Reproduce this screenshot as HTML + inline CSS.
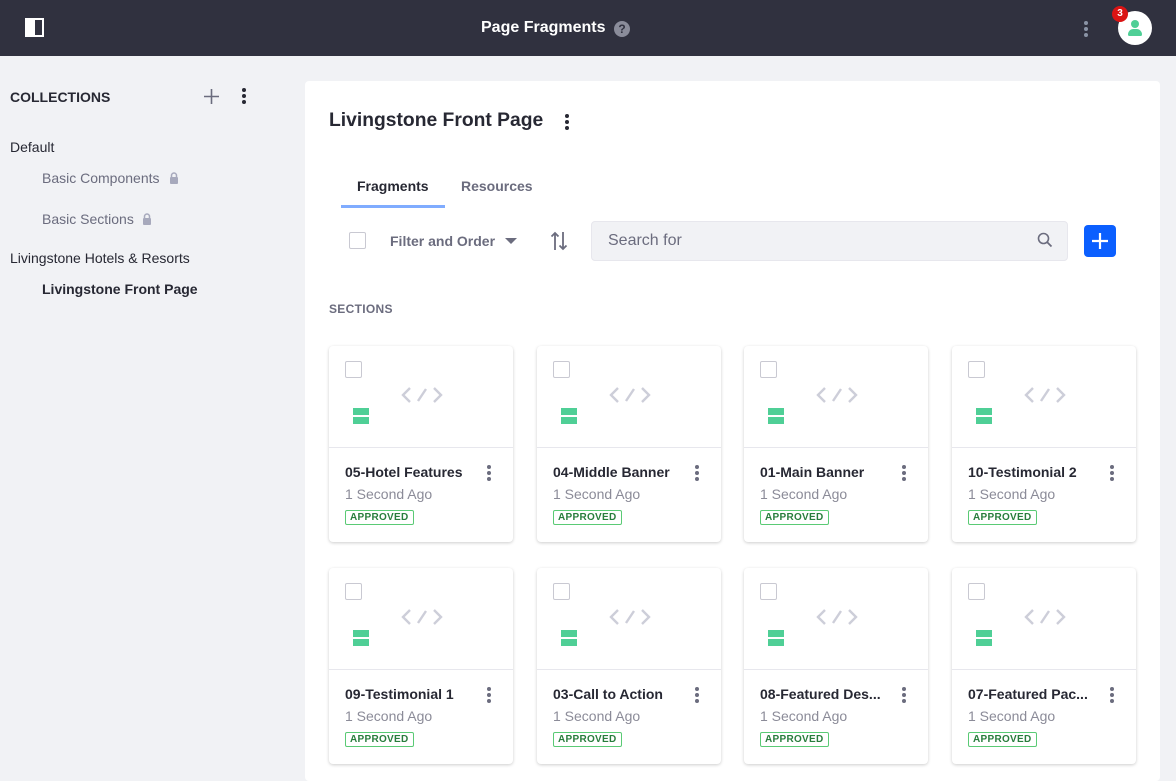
<!DOCTYPE html>
<html><head><meta charset="utf-8"><style>
*{box-sizing:border-box;margin:0;padding:0}
body{width:1176px;height:776px;overflow:hidden;background:#f1f2f5;font-family:"Liberation Sans",sans-serif;color:#272833;position:relative}
.top{position:absolute;left:0;top:0;width:1176px;height:56px;background:#30313f}
.abs{position:absolute}
.panel{position:absolute;left:305px;top:81px;width:855px;height:700px;background:#fff;border-radius:4px}
.card{position:absolute;width:184px;height:196px;background:#fff;border-radius:4px;box-shadow:0 1px 3px rgba(0,0,0,.2)}
.card .img{height:102px;border-bottom:1px solid #e7e7ed;position:relative}
.cb{position:absolute;width:17px;height:17px;border:1px solid #c9c9d2;border-radius:2px;background:#fff}
.card .t{position:absolute;left:16px;top:118px;font-size:14px;font-weight:bold;color:#272833}
.card .s{position:absolute;left:16px;top:140px;font-size:14px;color:#8b8b98}
.card .b{position:absolute;left:16px;top:164px;font-size:10px;font-weight:bold;color:#287d3c;border:1px solid #5aca75;border-radius:2px;padding:1px 4px;letter-spacing:.3px;line-height:11px}
.dots{position:absolute;width:4px}
.dots i{display:block;width:4px;height:4px;border-radius:2px;background:#6b6c7e;margin-bottom:2px}
</style></head><body>
<div class="top">
 <div class="abs" style="left:25px;top:18px;width:19px;height:19px;border:2px solid #fff;"><div style="width:8px;height:15px;background:#fff"></div></div>
 <div class="abs" style="left:481px;top:19px;color:#fff;font-size:16px;font-weight:bold">Page Fragments</div>
 <div class="abs" style="left:614px;top:21px;width:16px;height:16px;border-radius:8px;background:#8a8c9a;color:#30313f;font-size:12px;font-weight:bold;text-align:center;line-height:16px">?</div>
 <div class="dots" style="left:1084px;top:21px"><i style="background:#8a93a5"></i><i style="background:#8a93a5"></i><i style="background:#8a93a5"></i></div>
 <div class="abs" style="left:1118px;top:11px;width:34px;height:34px;border-radius:17px;background:#fff">
  <div class="abs" style="left:13px;top:9px;width:8px;height:8px;border-radius:4px;background:#4fcf96"></div>
  <div class="abs" style="left:10px;top:18px;width:14px;height:7px;border-radius:7px 7px 2px 2px;background:#4fcf96"></div>
 </div>
 <div class="abs" style="left:1112px;top:6px;width:16px;height:16px;border-radius:8px;background:#da1414;color:#fff;font-size:10px;font-weight:bold;text-align:center;line-height:16px">3</div>
</div>

<div class="abs" style="left:10px;top:89px;font-size:14px;font-weight:bold">COLLECTIONS</div>
<svg class="abs" style="left:203px;top:88px" width="17" height="17"><path d="M8.5 1v15M1 8.5h15" stroke="#6b6c7e" stroke-width="1.6"/></svg>
<div class="dots" style="left:242px;top:88px"><i style="background:#272833"></i><i style="background:#272833"></i><i style="background:#272833"></i></div>
<div class="abs" style="left:10px;top:139px;font-size:14px">Default</div>
<div class="abs" style="left:42px;top:170px;font-size:14px;color:#6b6c7e">Basic Components</div>
<svg class="abs" style="left:169px;top:172px" width="10" height="12" viewBox="0 0 10 12"><path d="M2.5 5V3.5a2.5 2.5 0 015 0V5" fill="none" stroke="#a7a9bc" stroke-width="1.5"/><rect x="1" y="5" width="8" height="7" rx="1" fill="#a7a9bc"/></svg>
<div class="abs" style="left:42px;top:211px;font-size:14px;color:#6b6c7e">Basic Sections</div>
<svg class="abs" style="left:142px;top:213px" width="10" height="12" viewBox="0 0 10 12"><path d="M2.5 5V3.5a2.5 2.5 0 015 0V5" fill="none" stroke="#a7a9bc" stroke-width="1.5"/><rect x="1" y="5" width="8" height="7" rx="1" fill="#a7a9bc"/></svg>
<div class="abs" style="left:10px;top:250px;font-size:14px">Livingstone Hotels &amp; Resorts</div>
<div class="abs" style="left:42px;top:281px;font-size:14px;font-weight:bold">Livingstone Front Page</div>

<div class="panel"></div>
<div class="abs" style="left:329px;top:110px;font-size:19.3px;font-weight:bold">Livingstone Front Page</div>
<div class="dots" style="left:565px;top:114px"><i style="background:#272833"></i><i style="background:#272833"></i><i style="background:#272833"></i></div>
<div class="abs" style="left:357px;top:178px;font-size:14px;font-weight:bold">Fragments</div>
<div class="abs" style="left:461px;top:178px;font-size:14px;font-weight:bold;color:#6b6c7e">Resources</div>
<div class="abs" style="left:341px;top:205px;width:104px;height:3px;background:#80acff"></div>
<div class="cb" style="left:349px;top:232px"></div>
<div class="abs" style="left:390px;top:233px;font-size:14px;font-weight:bold;color:#6b6c7e">Filter and Order</div>
<div class="abs" style="left:505px;top:238px;width:0;height:0;border-left:6px solid transparent;border-right:6px solid transparent;border-top:6px solid #6b6c7e"></div>
<svg class="abs" style="left:550px;top:231px" width="18" height="20" viewBox="0 0 18 20"><path d="M5 19V2M1.5 5.5L5 2l3.5 3.5M13 1v17M9.5 14.5L13 18l3.5-3.5" fill="none" stroke="#6b6c7e" stroke-width="1.8"/></svg>
<div class="abs" style="left:591px;top:221px;width:477px;height:40px;background:#f1f2f5;border:1px solid #e7e7ed;border-radius:4px"></div>
<div class="abs" style="left:608px;top:232px;font-size:16px;color:#6b6c7e">Search for</div>
<svg class="abs" style="left:1037px;top:232px" width="16" height="16" viewBox="0 0 16 16"><circle cx="6.5" cy="6.5" r="5" fill="none" stroke="#6b6c7e" stroke-width="1.6"/><path d="M10 10l4.5 4.5" stroke="#6b6c7e" stroke-width="1.8"/></svg>
<div class="abs" style="left:1084px;top:225px;width:32px;height:32px;background:#0b5fff;border-radius:4px"><svg width="32" height="32"><path d="M16 8v16M8 16h16" stroke="#fff" stroke-width="2.2"/></svg></div>
<div class="abs" style="left:329px;top:302px;font-size:12px;font-weight:bold;color:#6b6c7e;letter-spacing:.3px">SECTIONS</div>

<div id="cards"></div>
<script>
var t=["05-Hotel Features","04-Middle Banner","01-Main Banner","10-Testimonial 2","09-Testimonial 1","03-Call to Action","08-Featured Des...","07-Featured Pac..."];
var xs=[329,537,744,952],ys=[346,568],h="";
t.forEach(function(s,i){var x=xs[i%4],y=ys[Math.floor(i/4)];
h+='<div class="card" style="left:'+x+'px;top:'+y+'px"><div class="img"><div class="cb" style="left:16px;top:15px"></div>'+
'<svg style="position:absolute;left:72px;top:39px" width="42" height="20" viewBox="0 0 42 20"><path d="M9 3L2 10l7 7M33 3l7 7-7 7M17 16l8-12" fill="none" stroke="#cdced9" stroke-width="2.4"/></svg>'+
'<div style="position:absolute;left:24px;top:62px;width:16px;height:7px;background:#4fcf96"></div><div style="position:absolute;left:24px;top:71px;width:16px;height:7px;background:#4fcf96"></div></div>'+
'<div class="t">'+s+'</div><div class="s">1 Second Ago</div><div class="b">APPROVED</div>'+
'<div class="dots" style="left:158px;top:119px"><i></i><i></i><i></i></div></div>';});
document.getElementById("cards").innerHTML=h;
</script>
</body></html>
